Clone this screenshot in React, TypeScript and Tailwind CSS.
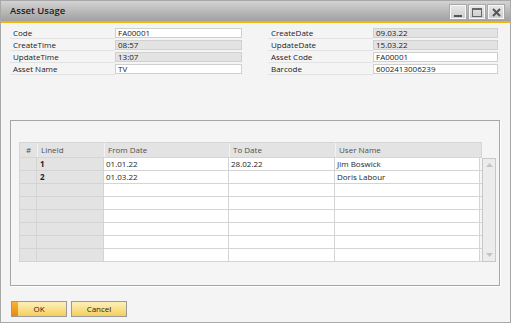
import React from "react";

const font = { fontFamily: '"Open Sans", "Noto Sans", "DejaVu Sans", sans-serif' };

function Field({ label, value, gray, labelW }: { label: string; value: string; gray?: boolean; labelW: string }) {
  return (
    <div className="flex h-[12px] items-start">
      <div className={`${labelW} h-[11px] border-b border-[#e2e2e2] pl-[3px] text-[8px] leading-[10px] text-[#1a1a1a]`}>{label}</div>
      <div
        className={`h-[10px] flex-1 border px-[2px] text-[8px] leading-[8px] text-[#1a1a1a] ${
          gray ? "border-[#d0d0d0] bg-[#e3e3e3]" : "border-[#cfcfcf] bg-white"
        }`}
      >
        {value}
      </div>
    </div>
  );
}

const cols = ["w-[17px]", "w-[67px]", "w-[125px]", "w-[106px]", "w-[146px]"];
const headers = ["#", "LineId", "From Date", "To Date", "User Name"];
const rows: string[][] = [
  ["", "1", "01.01.22", "28.02.22", "Jim Boswick"],
  ["", "2", "01.03.22", "", "Doris Labour"],
  ["", "", "", "", ""],
  ["", "", "", "", ""],
  ["", "", "", "", ""],
  ["", "", "", "", ""],
  ["", "", "", "", ""],
  ["", "", "", "", ""],
];

function WinBtn({ children }: { children: React.ReactNode }) {
  return (
    <div className="flex h-[14px] w-[16px] items-center justify-center border border-[#f8f8f8] bg-gradient-to-b from-[#e6e6e6] to-[#cdcdcd] shadow-[0_0_0_1px_#a8a8a8]">
      {children}
    </div>
  );
}

export default function App() {
  return (
    <div className="h-[326px] w-[517px] bg-white" style={font}>
      <div className="flex h-[323px] w-[511px] flex-col border border-[#a8a8a8] bg-[#f4f4f4]">
        {/* title bar */}
        <div className="flex h-[20px] items-center justify-between bg-gradient-to-b from-[#d4d4d4] to-[#a0a0a0] pl-[9px] pr-[6px]">
          <div className="text-[9.5px] font-semibold text-[#1e1e1e]">Asset Usage</div>
          <div className="flex gap-[3px] pt-[2px]">
            <WinBtn>
              <div className="mt-[7px] h-[2px] w-[8px] bg-[#555555]" />
            </WinBtn>
            <WinBtn>
              <div className="h-[9px] w-[10px] border border-[#666666] border-t-2" />
            </WinBtn>
            <WinBtn>
              <svg width="9" height="9" viewBox="0 0 9 9">
                <path d="M1 1 L8 8 M8 1 L1 8" stroke="#555555" strokeWidth="2" />
              </svg>
            </WinBtn>
          </div>
        </div>
        <div className="h-[2px] bg-[#f2b705]" />

        {/* form */}
        <div className="flex gap-[26px] pl-[9px] pt-[5px]">
          <div className="flex w-[232px] flex-col">
            <Field label="Code" value="FA00001" labelW="w-[105px]" />
            <Field label="CreateTime" value="08:57" gray labelW="w-[105px]" />
            <Field label="UpdateTime" value="13:07" gray labelW="w-[105px]" />
            <Field label="Asset Name" value="TV" labelW="w-[105px]" />
          </div>
          <div className="flex w-[230px] flex-col">
            <Field label="CreateDate" value="09.03.22" gray labelW="w-[105px]" />
            <Field label="UpdateDate" value="15.03.22" gray labelW="w-[105px]" />
            <Field label="Asset Code" value="FA00001" labelW="w-[105px]" />
            <Field label="Barcode" value="6002413006239" labelW="w-[105px]" />
          </div>
        </div>

        {/* group box */}
        <div className="ml-[9px] mt-[44px] h-[166px] w-[490px] border border-[#a6a6a6] bg-[#f5f5f5] pl-[8px] pt-[21px] shadow-[1px_1px_0_#ffffff]">
          <div className="flex">
            <div className="flex flex-col">
              {/* header */}
              <div className="flex h-[16px] border border-[#d6d6d6] bg-[#e3e3e3]">
                {headers.map((h, i) => (
                  <div
                    key={i}
                    className={`${cols[i]} ${i === 0 ? "text-center" : "pl-[3px]"} ${
                      i > 0 ? "border-l border-[#f2f2f2]" : ""
                    } shrink-0 text-[8px] leading-[14px] text-[#505050]`}
                  >
                    {h}
                  </div>
                ))}
              </div>
              {rows.map((r, ri) => (
                <div key={ri} className="flex h-[13px] border-b border-[#d4d4d4]">
                  {r.map((c, ci) => (
                    <div
                      key={ci}
                      className={`${cols[ci]} shrink-0 border-l border-[#d4d4d4] ${
                        ci < 2 ? "bg-[#e3e3e3]" : "bg-white"
                      } ${ci === 4 ? "border-r" : ""} ${
                        ci === 1 ? "pl-[3px] font-bold" : "pl-[2px] font-medium"
                      } text-[8px] leading-[12px] text-[#1e1e1e]`}
                    >
                      {c}
                    </div>
                  ))}
                </div>
              ))}
            </div>
            <div className="mt-[16px] flex h-[104px] w-[14px] flex-col items-center justify-between border border-[#c8c8c8] bg-[#ececec] py-[4px]">
              <svg width="7" height="4" viewBox="0 0 7 4">
                <path d="M0 4 L3.5 0 L7 4 Z" fill="#c4c4c4" />
              </svg>
              <svg width="7" height="4" viewBox="0 0 7 4">
                <path d="M0 0 L3.5 4 L7 0 Z" fill="#c4c4c4" />
              </svg>
            </div>
          </div>
        </div>

        {/* buttons */}
        <div className="ml-[10px] mt-[15px] flex gap-[4px]">
          <div className="relative flex h-[16px] w-[56px] items-center justify-center overflow-hidden border border-[#9a9a9a] bg-gradient-to-b from-[#fdf0b8] to-[#f4cf5a] text-[8px] text-[#1e1e1e]">
            <div className="absolute left-0 top-0 h-full w-[6px] bg-gradient-to-b from-[#f9b233] to-[#e98a0c]" />
            OK
          </div>
          <div className="flex h-[16px] w-[56px] items-center justify-center border border-[#9a9a9a] bg-gradient-to-b from-[#fdf0b8] to-[#f4cf5a] text-[8px] text-[#1e1e1e]">
            Cancel
          </div>
        </div>
      </div>
    </div>
  );
}
